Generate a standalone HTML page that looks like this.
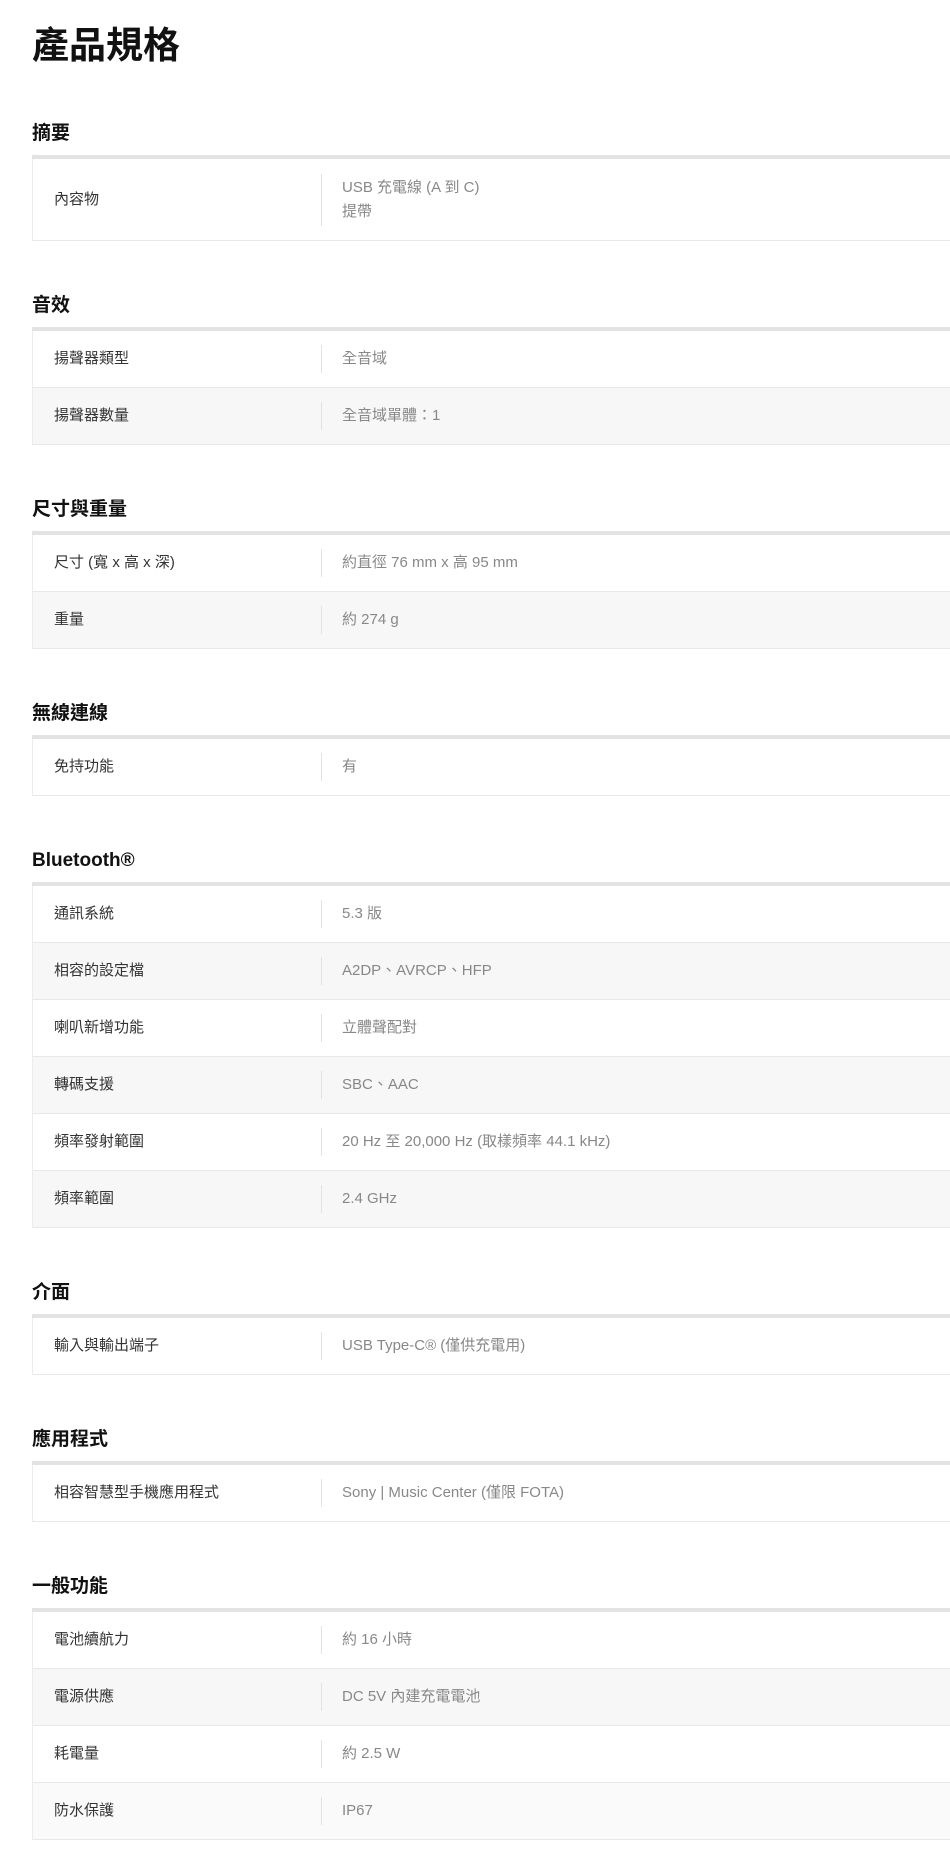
<!DOCTYPE html>
<html><head><meta charset="utf-8"><style>
html,body{margin:0;padding:0;background:#fff;width:950px;height:1859px;overflow:hidden}
body{font-family:"Liberation Sans","Noto Sans CJK TC",sans-serif;position:relative}
h1{position:absolute;left:32px;top:22px;margin:0;font-size:37px;line-height:48px;font-weight:bold;color:#111}
.wrap{position:absolute;left:32px;top:119px;width:930px}
.sec{margin-bottom:50px}
.sec h2{margin:0;font-size:19px;line-height:30px;font-weight:bold;color:#111;height:30px}
.bar{height:4px;background:#e3e3e3;margin-top:6px}
.tbl{border-left:1px solid #ececec;}
.row{height:56px;border-bottom:1px solid #e8e8e8;display:flex;align-items:center;background:#fff}
.row:nth-child(even){background:#f7f7f7}
.row.two{height:81px}
.lab{width:288px;padding-left:21px;font-size:15px;line-height:24px;color:#333;box-sizing:border-box}
.div{width:1px;height:28px;background:#e2e2e2;margin-right:20px}
.row.two .div{height:52px}
.val{font-size:15px;color:#888;line-height:24px}
</style></head><body>
<h1>產品規格</h1>
<div class="wrap">
<div class="sec"><h2>摘要</h2><div class="bar"></div><div class="tbl">
<div class="row two"><div class="lab">內容物</div><div class="div"></div><div class="val">USB 充電線 (A 到 C)<br>提帶</div></div>
</div></div>
<div class="sec"><h2>音效</h2><div class="bar"></div><div class="tbl">
<div class="row"><div class="lab">揚聲器類型</div><div class="div"></div><div class="val">全音域</div></div>
<div class="row"><div class="lab">揚聲器數量</div><div class="div"></div><div class="val">全音域單體：1</div></div>
</div></div>
<div class="sec"><h2>尺寸與重量</h2><div class="bar"></div><div class="tbl">
<div class="row"><div class="lab">尺寸 (寬 x 高 x 深)</div><div class="div"></div><div class="val">約直徑 76 mm x 高 95 mm</div></div>
<div class="row"><div class="lab">重量</div><div class="div"></div><div class="val">約 274 g</div></div>
</div></div>
<div class="sec"><h2>無線連線</h2><div class="bar"></div><div class="tbl">
<div class="row"><div class="lab">免持功能</div><div class="div"></div><div class="val">有</div></div>
</div></div>
<div class="sec"><h2>Bluetooth®</h2><div class="bar"></div><div class="tbl">
<div class="row"><div class="lab">通訊系統</div><div class="div"></div><div class="val">5.3 版</div></div>
<div class="row"><div class="lab">相容的設定檔</div><div class="div"></div><div class="val">A2DP、AVRCP、HFP</div></div>
<div class="row"><div class="lab">喇叭新增功能</div><div class="div"></div><div class="val">立體聲配對</div></div>
<div class="row"><div class="lab">轉碼支援</div><div class="div"></div><div class="val">SBC、AAC</div></div>
<div class="row"><div class="lab">頻率發射範圍</div><div class="div"></div><div class="val">20 Hz 至 20,000 Hz (取樣頻率 44.1 kHz)</div></div>
<div class="row"><div class="lab">頻率範圍</div><div class="div"></div><div class="val">2.4 GHz</div></div>
</div></div>
<div class="sec"><h2>介面</h2><div class="bar"></div><div class="tbl">
<div class="row"><div class="lab">輸入與輸出端子</div><div class="div"></div><div class="val">USB Type-C® (僅供充電用)</div></div>
</div></div>
<div class="sec"><h2>應用程式</h2><div class="bar"></div><div class="tbl">
<div class="row"><div class="lab">相容智慧型手機應用程式</div><div class="div"></div><div class="val">Sony | Music Center (僅限 FOTA)</div></div>
</div></div>
<div class="sec"><h2>一般功能</h2><div class="bar"></div><div class="tbl">
<div class="row"><div class="lab">電池續航力</div><div class="div"></div><div class="val">約 16 小時</div></div>
<div class="row"><div class="lab">電源供應</div><div class="div"></div><div class="val">DC 5V 內建充電電池</div></div>
<div class="row"><div class="lab">耗電量</div><div class="div"></div><div class="val">約 2.5 W</div></div>
<div class="row" style="background:#fafafa"><div class="lab">防水保護</div><div class="div"></div><div class="val">IP67</div></div>
</div></div>
</div>
</body></html>
